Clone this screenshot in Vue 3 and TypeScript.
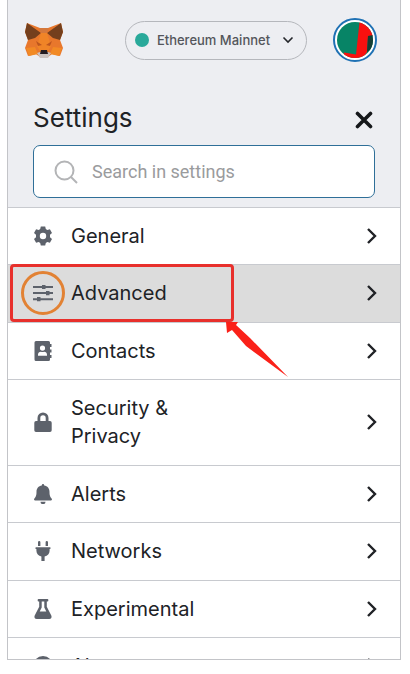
<script setup lang="ts">
import { ref } from 'vue'

interface SettingsTab {
  name: string
  icon: string
}

const tabs: SettingsTab[] = [
  {
    name: 'General',
    icon: 'M7.800 0.500h4.400l.6 2.600 1.500.9 2.600-.8 2.100 3.700-2 1.900v2.400l2 1.900-2.100 3.700-2.600-.8-1.500.9-.6 2.600H7.800l-.6-2.600-1.500-.9-2.600.8L1 13.100l2-1.900V8.800L1 6.900l2.100-3.700 2.600.8 1.500-.9zM10 6.800a3.200 3.200 0 1 0 0 6.400 3.200 3.200 0 0 0 0-6.400z',
  },
  {
    name: 'Advanced',
    icon: 'M0 3h9V1.900h3.500V3H20v2h-7.500v1.100H9V5H0zM0 9.100h13V8h3.500v1.100H20v2h-3.500v1.100H13v-1.100H0zM0 15.200h4v-1.100h3.500v1.100H20v2H7.500v1.100H4v-1.100H0z',
  },
  {
    name: 'Contacts',
    icon: 'M3 0h12.500A1.500 1.500 0 0 1 17 1.500V3h1.500v3H17v2.500h1.500v3H17V14h1.500v3H17v1.500a1.500 1.500 0 0 1-1.500 1.500H3a1.500 1.500 0 0 1-1.500-1.500v-17A1.500 1.500 0 0 1 3 0zM9.500 4.500a2.600 2.600 0 1 0 0 5.200 2.600 2.600 0 0 0 0-5.200zM5 14.800h9v-1c0-1.900-1.200-3.100-2.900-3.100-1 .5-2.200.5-3.200 0-1.700 0-2.900 1.200-2.900 3.100z',
  },
  {
    name: 'Security & Privacy',
    icon: 'M3 9h1.500V6a5.500 5.500 0 0 1 11 0v3H17a1.700 1.700 0 0 1 1.700 1.700v7.600A1.700 1.700 0 0 1 17 20H3a1.700 1.700 0 0 1-1.700-1.700v-7.600A1.700 1.700 0 0 1 3 9zm4.300 0h5.400V6a2.700 2.700 0 0 0-5.400 0z',
  },
  {
    name: 'Alerts',
    icon: 'M8.800 1.500V1.200a1.200 1.200 0 0 1 2.400 0v.3c3.300.5 5.300 3 5.300 6.200 0 4.200.9 5.400 2.100 6.700.8.900.3 2.200-1 2.200H2.400c-1.300 0-1.800-1.300-1-2.200 1.200-1.300 2.100-2.500 2.100-6.700 0-3.200 2-5.700 5.300-6.200zM7.500 17.700h5a2.500 2.500 0 0 1-5 0z',
  },
  {
    name: 'Networks',
    icon: 'M5 1.200a1.200 1.200 0 0 1 2.400 0V5H5zM12.600 1.200a1.200 1.200 0 0 1 2.400 0V5h-2.400zM3 6.200h14c.8 0 .8 1.800 0 1.800h-.4v1.700c0 3-2 5.300-5 5.800V20H8.400v-4.500c-3-.5-5-2.800-5-5.800V8H3c-.8 0-.8-1.800 0-1.800z',
  },
  {
    name: 'Experimental',
    icon: 'M5.500 0h9a.8.8 0 0 1 .8.800v1a.8.8 0 0 1-.8.800h-.7v5.200l4.500 8.600c.8 1.600-.1 3.600-2.100 3.600H3.800c-2 0-2.900-2-2.100-3.600l4.500-8.600V2.600h-.7a.8.8 0 0 1-.8-.8v-1a.8.8 0 0 1 .8-.8zM8.700 2.600v5.900l-2 4h6.600l-2-4V2.600z',
  },
  {
    name: 'About',
    icon: 'M10 0a10 10 0 1 1 0 20 10 10 0 0 1 0-20zM8.500 4v3h3V4zM8.500 8.500V16h3V8.500z',
  },
]

const selected = ref('Advanced')
const query = ref('')
</script>

<template>
  <main class="popup">
    <header class="head">
      <div class="top-bar">
        <svg class="fox" viewBox="0 0 38 36" role="img" aria-label="MetaMask">
          <path fill="#e8772c" d="M2 1l13 5h8l13-5 2 9-3 8 3 8-3 8-8-2-4 3h-8l-4-3-8 2-3-8 3-8-3-8z" />
          <path fill="#743f1d" d="M2 1l14 10-6 5-7 2-3-8zM36 1L22 11l6 5 7 2 3-8z" />
          <path fill="#d5783c" d="M14 6h10l-2 5h-6z" />
          <path fill="#f08427" d="M16 11h6l4 13-4 7h-6l-4-7z" />
          <path fill="#f28a25" d="M1 26l9-1 3 7-9 2zM37 26l-9-1-3 7 9 2z" />
          <path fill="#bd551e" d="M11 19l6 4-4 1zM27 19l-6 4 4 1z" />
          <path fill="#cbc2c0" d="M12 31l3-1h8l3 1-3 5h-8z" />
          <path fill="#231b22" d="M16 28h6l1 4h-8z" />
        </svg>
        <button class="network" type="button">
          <span class="dot"></span>
          <span>Ethereum Mainnet</span>
          <svg class="caret" viewBox="0 0 12 8" aria-hidden="true"><path d="M1.500 1.500L6 6l4.500-4.500" /></svg>
        </button>
        <button class="account" type="button" aria-label="Account">
          <svg viewBox="0 0 36 36" aria-hidden="true">
            <defs><clipPath id="disc"><circle cx="18" cy="18" r="18" /></clipPath></defs>
            <g clip-path="url(#disc)">
              <path fill="#078466" d="M0 0h36v36H0z" />
              <path fill="#f9100f" d="M22.500 0H36v14h-5l-1 16-4 6H6l1-5.500 12 2z" />
              <path fill="#153e35" d="M31 14l5-1v13l-6 4z" />
            </g>
          </svg>
        </button>
      </div>
      <div class="title-bar">
        <h1>Settings</h1>
        <button class="close" type="button" aria-label="Close">
          <svg viewBox="0 0 18 18" aria-hidden="true"><path d="M2.500 2.500l13 13M15.500 2.500l-13 13" /></svg>
        </button>
      </div>
      <label class="search">
        <svg viewBox="0 0 24 24" aria-hidden="true"><circle cx="10.500" cy="10.500" r="9" /><path d="M17 17l6 6" /></svg>
        <input v-model="query" type="search" placeholder="Search in settings" aria-label="Search in settings" />
      </label>
    </header>

    <nav class="tabs">
      <button
        v-for="tab in tabs"
        :key="tab.name"
        type="button"
        class="tab"
        :class="{ active: tab.name === selected }"
        @click="selected = tab.name"
      >
        <svg class="icon" viewBox="0 0 20 20" aria-hidden="true"><path fill-rule="evenodd" :d="tab.icon" /></svg>
        <span class="label">{{ tab.name }}</span>
        <svg class="chevron" viewBox="0 0 12 18" aria-hidden="true"><path d="M2 2l7 7-7 7" /></svg>
        <template v-if="tab.name === 'Advanced'">
          <span class="ring"></span>
          <span class="frame"></span>
          <svg class="arrow" viewBox="0 0 62 56" aria-hidden="true"><path d="M0 0h12l-2 3 14 13 38 39-42-31L6 8 1 11z" /></svg>
        </template>
      </button>
    </nav>
  </main>
</template>

<style>
body {
  background: #fff;
}
</style>

<style scoped>
* {
  box-sizing: border-box;
}

.popup {
  display: flex;
  flex-direction: column;
  height: calc(100vh - 14px);
  margin: 0 9px 14px 7px;
  overflow: hidden;
  border: 1px solid #c3c4c8;
  border-top: 0;
  background: #fff;
  color: #202226;
  font-family: Inter, "Liberation Sans", sans-serif;
}

button {
  margin: 0;
  padding: 0;
  border: 0;
  background: none;
  color: inherit;
  font: inherit;
  cursor: pointer;
}

svg {
  display: block;
  flex: none;
}

.head {
  flex: none;
  padding: 18px 25px 9px;
  border-bottom: 1px solid #c8cacf;
  background: #edeef2;
}

.top-bar {
  display: flex;
  align-items: center;
  justify-content: space-between;
  margin: 0 -2px 0 -8px;
}

.fox {
  width: 38px;
  height: 36px;
}

.network {
  display: flex;
  align-items: center;
  gap: 8px;
  height: 39px;
  margin-left: 36px;
  padding: 0 12px 0 9px;
  border: 1px solid #b5b7bc;
  border-radius: 20px;
  color: #54565b;
  font-size: 13px;
  font-weight: 500;
}

.dot {
  width: 14px;
  height: 14px;
  border-radius: 50%;
  background: #29a99a;
}

.caret {
  width: 12px;
  height: 8px;
  margin-left: 4px;
  fill: none;
  stroke: #25272b;
  stroke-width: 1.6;
}

.account {
  width: 44px;
  height: 44px;
  padding: 2px;
  border: 2px solid #1f71b4;
  border-radius: 50%;
  background: #fff;
}

.account svg {
  width: 36px;
  height: 36px;
}

.title-bar {
  display: flex;
  align-items: flex-end;
  justify-content: space-between;
  padding: 40px 2px 11px 0;
}

h1 {
  margin: 0;
  font-size: 26px;
  font-weight: 400;
  line-height: 32px;
}

.close svg {
  width: 18px;
  height: 18px;
  margin-bottom: 5px;
  fill: none;
  stroke: #15171a;
  stroke-width: 3.6;
  stroke-linecap: round;
}

.search {
  display: flex;
  align-items: center;
  gap: 14px;
  height: 53px;
  padding: 0 20px;
  border: 1px solid #2f6f98;
  border-radius: 7px;
  background: #fff;
}

.search svg {
  width: 24px;
  height: 24px;
  fill: none;
  stroke: #b3b4b6;
  stroke-width: 2;
}

.search input {
  flex: 1;
  min-width: 0;
  padding: 0;
  border: 0;
  outline: 0;
  background: none;
  color: #202226;
  font-family: Roboto, sans-serif;
  font-size: 18px;
}

.search input::placeholder {
  color: #9a9b9d;
  opacity: 1;
}

.tabs {
  flex: 1;
  min-height: 0;
}

.tab {
  position: relative;
  display: flex;
  align-items: center;
  width: 100%;
  padding: 14px 22px 14px 25px;
  border-bottom: 1px solid #c8cacf;
  font-size: 20px;
  line-height: 28px;
  text-align: left;
}

.tab:nth-child(even) {
  padding-bottom: 15px;
}

.tab.active {
  background: #dcdcdc;
}

.icon {
  width: 20px;
  height: 20px;
  margin-right: 18px;
  fill: #5d626b;
}

.label {
  max-width: 40%;
}

.chevron {
  width: 12px;
  height: 18px;
  margin-left: auto;
  fill: none;
  stroke: #202226;
  stroke-width: 2.4;
}

.ring {
  position: absolute;
  top: 6px;
  left: 13px;
  width: 44px;
  height: 44px;
  border: 3px solid #e28234;
  border-radius: 50%;
}

.frame {
  position: absolute;
  top: -1px;
  left: 2px;
  width: 224px;
  height: 58px;
  border: 3px solid #e8302c;
  border-radius: 4px;
}

.arrow {
  position: absolute;
  z-index: 1;
  top: 57px;
  left: 218px;
  width: 62px;
  height: 56px;
  fill: #fa2119;
}
</style>
